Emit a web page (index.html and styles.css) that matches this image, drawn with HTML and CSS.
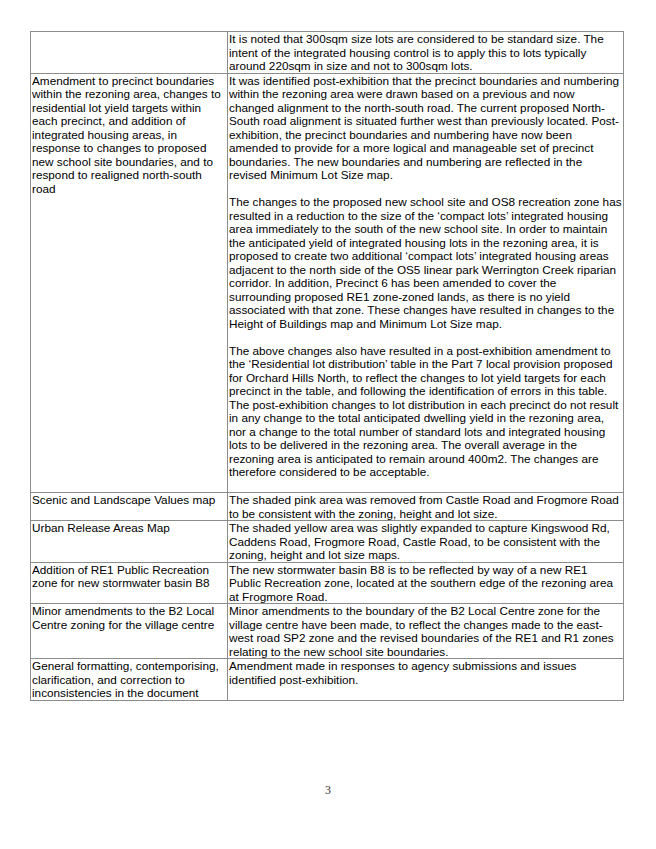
FILE: index.html
```html
<!DOCTYPE html>
<html>
<head>
<meta charset="utf-8">
<link rel="stylesheet" href="styles.css">
</head>
<body>
<div class="page">
<table class="changes">
<colgroup><col class="c1"><col class="c2"></colgroup>
<tr>
<td></td>
<td>It is noted that 300sqm size lots are considered to be standard size. The<br>intent of the integrated housing control is to apply this to lots typically<br>around 220sqm in size and not to 300sqm lots.</td>
</tr>
<tr>
<td>Amendment to precinct boundaries<br>within the rezoning area, changes to<br>residential lot yield targets within<br>each precinct, and addition of<br>integrated housing areas, in<br>response to changes to proposed<br>new school site boundaries, and to<br>respond to realigned north-south<br>road</td>
<td>
<p class="para">It was identified post-exhibition that the precinct boundaries and numbering<br>within the rezoning area were drawn based on a previous and now<br>changed alignment to the north-south road. The current proposed North-<br>South road alignment is situated further west than previously located. Post-<br>exhibition, the precinct boundaries and numbering have now been<br>amended to provide for a more logical and manageable set of precinct<br>boundaries. The new boundaries and numbering are reflected in the<br>revised Minimum Lot Size map.</p>
<p class="para">The changes to the proposed new school site and OS8 recreation zone has<br>resulted in a reduction to the size of the ‘compact lots’ integrated housing<br>area immediately to the south of the new school site. In order to maintain<br>the anticipated yield of integrated housing lots in the rezoning area, it is<br>proposed to create two additional ‘compact lots’ integrated housing areas<br>adjacent to the north side of the OS5 linear park Werrington Creek riparian<br>corridor. In addition, Precinct 6 has been amended to cover the<br>surrounding proposed RE1 zone-zoned lands, as there is no yield<br>associated with that zone. These changes have resulted in changes to the<br>Height of Buildings map and Minimum Lot Size map.</p>
<p class="para">The above changes also have resulted in a post-exhibition amendment to<br>the ‘Residential lot distribution’ table in the Part 7 local provision proposed<br>for Orchard Hills North, to reflect the changes to lot yield targets for each<br>precinct in the table, and following the identification of errors in this table.<br>The post-exhibition changes to lot distribution in each precinct do not result<br>in any change to the total anticipated dwelling yield in the rezoning area,<br>nor a change to the total number of standard lots and integrated housing<br>lots to be delivered in the rezoning area. The overall average in the<br>rezoning area is anticipated to remain around 400m2. The changes are<br>therefore considered to be acceptable.</p>
</td>
</tr>
<tr>
<td>Scenic and Landscape Values map</td>
<td>The shaded pink area was removed from Castle Road and Frogmore Road<br>to be consistent with the zoning, height and lot size.</td>
</tr>
<tr>
<td>Urban Release Areas Map</td>
<td>The shaded yellow area was slightly expanded to capture Kingswood Rd,<br>Caddens Road, Frogmore Road, Castle Road, to be consistent with the<br>zoning, height and lot size maps.</td>
</tr>
<tr>
<td>Addition of RE1 Public Recreation<br>zone for new stormwater basin B8</td>
<td>The new stormwater basin B8 is to be reflected by way of a new RE1<br>Public Recreation zone, located at the southern edge of the rezoning area<br>at Frogmore Road.</td>
</tr>
<tr>
<td>Minor amendments to the B2 Local<br>Centre zoning for the village centre</td>
<td>Minor amendments to the boundary of the B2 Local Centre zone for the<br>village centre have been made, to reflect the changes made to the east-<br>west road SP2 zone and the revised boundaries of the RE1 and R1 zones<br>relating to the new school site boundaries.</td>
</tr>
<tr>
<td>General formatting, contemporising,<br>clarification, and correction to<br>inconsistencies in the document</td>
<td>Amendment made in responses to agency submissions and issues<br>identified post-exhibition.</td>
</tr>
</table>
<div class="pagenum">3</div>
</div>
</body>
</html>
```

FILE: styles.css
```css
html, body {
  margin: 0;
  padding: 0;
  background: #ffffff;
}

.page {
  width: 656px;
  padding-top: 31px;
  box-sizing: border-box;
}

.changes {
  margin-left: 30px;
  width: 593px;
  border-collapse: collapse;
  table-layout: fixed;
  font-family: "Liberation Sans", Arial, sans-serif;
  font-size: 11.75px;
  line-height: 13.5px;
  color: #000;
}

.c1 { width: 197px; }
.c2 { width: 396px; }

.changes td {
  border: 1px solid #8c8c8c;
  padding: 0 1px 0 1px;
  vertical-align: top;
  white-space: nowrap;
}

.para {
  margin: 0 0 13.5px 0;
}

.pagenum {
  margin-top: 82px;
  text-align: center;
  font-family: "Liberation Serif", "Times New Roman", serif;
  font-size: 12px;
  color: #333;
}
```
